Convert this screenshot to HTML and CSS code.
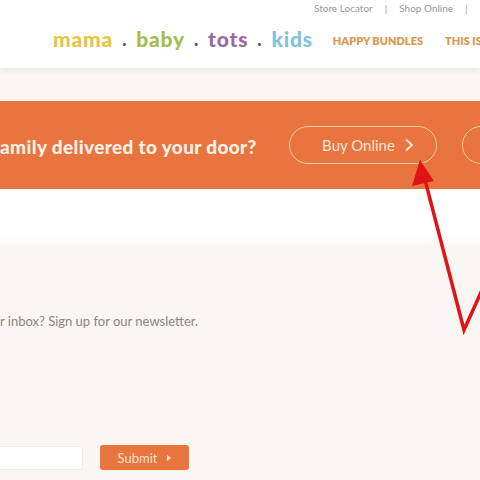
FILE: index.html
```html
<!DOCTYPE html>
<html>
<head>
<meta charset="utf-8">
<link rel="stylesheet" href="styles.css">
</head>
<body>
<header class="header">
  <div class="toplinks">
    <span>Store Locator</span><span class="sep">|</span><span>Shop Online</span><span class="sep">|</span>
  </div>
  <div class="mainrow">
    <div class="logo">
      <span class="mama">mama</span><span class="dot">.</span><span class="baby">baby</span><span class="dot">.</span><span class="tots">tots</span><span class="dot">.</span><span class="kids">kids</span>
    </div>
    <nav class="nav"><span>HAPPY BUNDLES</span><span>THIS IS</span></nav>
  </div>
</header>
<section class="band">
  <div class="band-text">amily delivered to your door?</div>
  <a class="pill">Buy Online <svg class="chev" width="10" height="14" viewBox="0 0 10 14"><path d="M2 1.5 L8 7 L2 12.5" fill="none" stroke="#fbe4d4" stroke-width="2"/></svg></a>
  <a class="pill pill2"></a>
</section>
<section class="newsletter">
  <p class="nl-text">r inbox? Sign up for our newsletter.</p>
  <form class="nl-form">
    <div class="nl-input"></div>
    <div class="nl-btn">Submit <span class="tri"></span></div>
  </form>
</section>
<svg class="arrow" width="480" height="480" viewBox="0 0 480 480">
  <polyline points="424,176 464,330 482,290" fill="none" stroke="#e01414" stroke-width="3.5" stroke-linejoin="miter"/>
  <polygon points="420,160 412,186 434,181" fill="#e01414"/>
</svg>
</body>
</html>
```
FILE: styles.css
```css
html, body { margin: 0; padding: 0; }
body {
  width: 480px;
  height: 480px;
  overflow: hidden;
  position: relative;
  background: #faf6f1;
  font-family: "Lato", "Open Sans", sans-serif;
}
.header {
  background: #fff;
  height: 68px;
  box-shadow: 0 2px 6px rgba(0,0,0,0.08);
  position: relative;
  z-index: 1;
}
.toplinks {
  padding-left: 314px;
  padding-top: 2px;
  font-size: 10px;
  color: #9a9a9a;
  white-space: nowrap;
  height: 14px;
  line-height: 12px;
}
.toplinks .sep { margin: 0 12px; }
.mainrow {
  display: flex;
  align-items: center;
  padding-left: 53px;
  margin-top: 10px;
  white-space: nowrap;
}
.logo {
  font-size: 21px;
  font-weight: 900;
  letter-spacing: 0.8px;
  display: flex;
  align-items: center;
}
.logo .dot { color: #555; margin: 0 9px; font-size: 18px; }
.mama { color: #e5c73c; }
.baby { color: #a3bd52; }
.tots { color: #9a6aa6; }
.kids { color: #7fc3d8; }
.nav {
  display: flex;
  gap: 22px;
  margin-left: 20px;
  font-size: 11px;
  font-weight: 800;
  color: #dc9850;
  padding-top: 4px;
}
.band {
  margin-top: 33px;
  height: 88px;
  background: #e8753f;
  display: flex;
  align-items: center;
  white-space: nowrap;
  overflow: hidden;
}
.band-text {
  color: #fdf0e6;
  font-size: 19px;
  font-weight: 900;
  letter-spacing: 0.35px;
  width: 289px;
  flex: none;
  margin-top: 2px;
}
.pill {
  flex: none;
  box-sizing: border-box;
  width: 148px;
  height: 38px;
  border: 1px solid #f7c9a6;
  border-radius: 19px;
  display: flex;
  align-items: center;
  justify-content: center;
  gap: 9px;
  color: #fbe4d4;
  font-size: 15px;
  font-family: "Lato", sans-serif;
  padding-left: 10px;
}
.pill2 { margin-left: 25px; }
.newsletter {
  background: linear-gradient(#fff 0px, #fff 45px, #faf6f1 60px);
  padding-top: 124px;
  height: 290px;
  box-sizing: border-box;
}
.nl-text {
  margin: 0;
  font-size: 13px;
  color: #8a8583;
  line-height: 16px;
}
.nl-form {
  display: flex;
  margin-top: 116px;
  gap: 17px;
  align-items: center;
}
.nl-input {
  width: 83px;
  height: 24px;
  background: #fff;
  border: 1px solid #f0ece8;
  border-left: none;
  box-sizing: border-box;
}
.nl-btn {
  width: 89px;
  height: 25px;
  background: #e8743e;
  border-radius: 3px;
  color: #fce1cf;
  font-size: 13px;
  display: flex;
  align-items: center;
  justify-content: center;
  gap: 10px;
}
.tri {
  width: 0; height: 0;
  border-left: 4px solid #fce1cf;
  border-top: 3.5px solid transparent;
  border-bottom: 3.5px solid transparent;
}
.arrow {
  position: absolute;
  left: 0;
  top: 0;
  z-index: 5;
  pointer-events: none;
}
```
